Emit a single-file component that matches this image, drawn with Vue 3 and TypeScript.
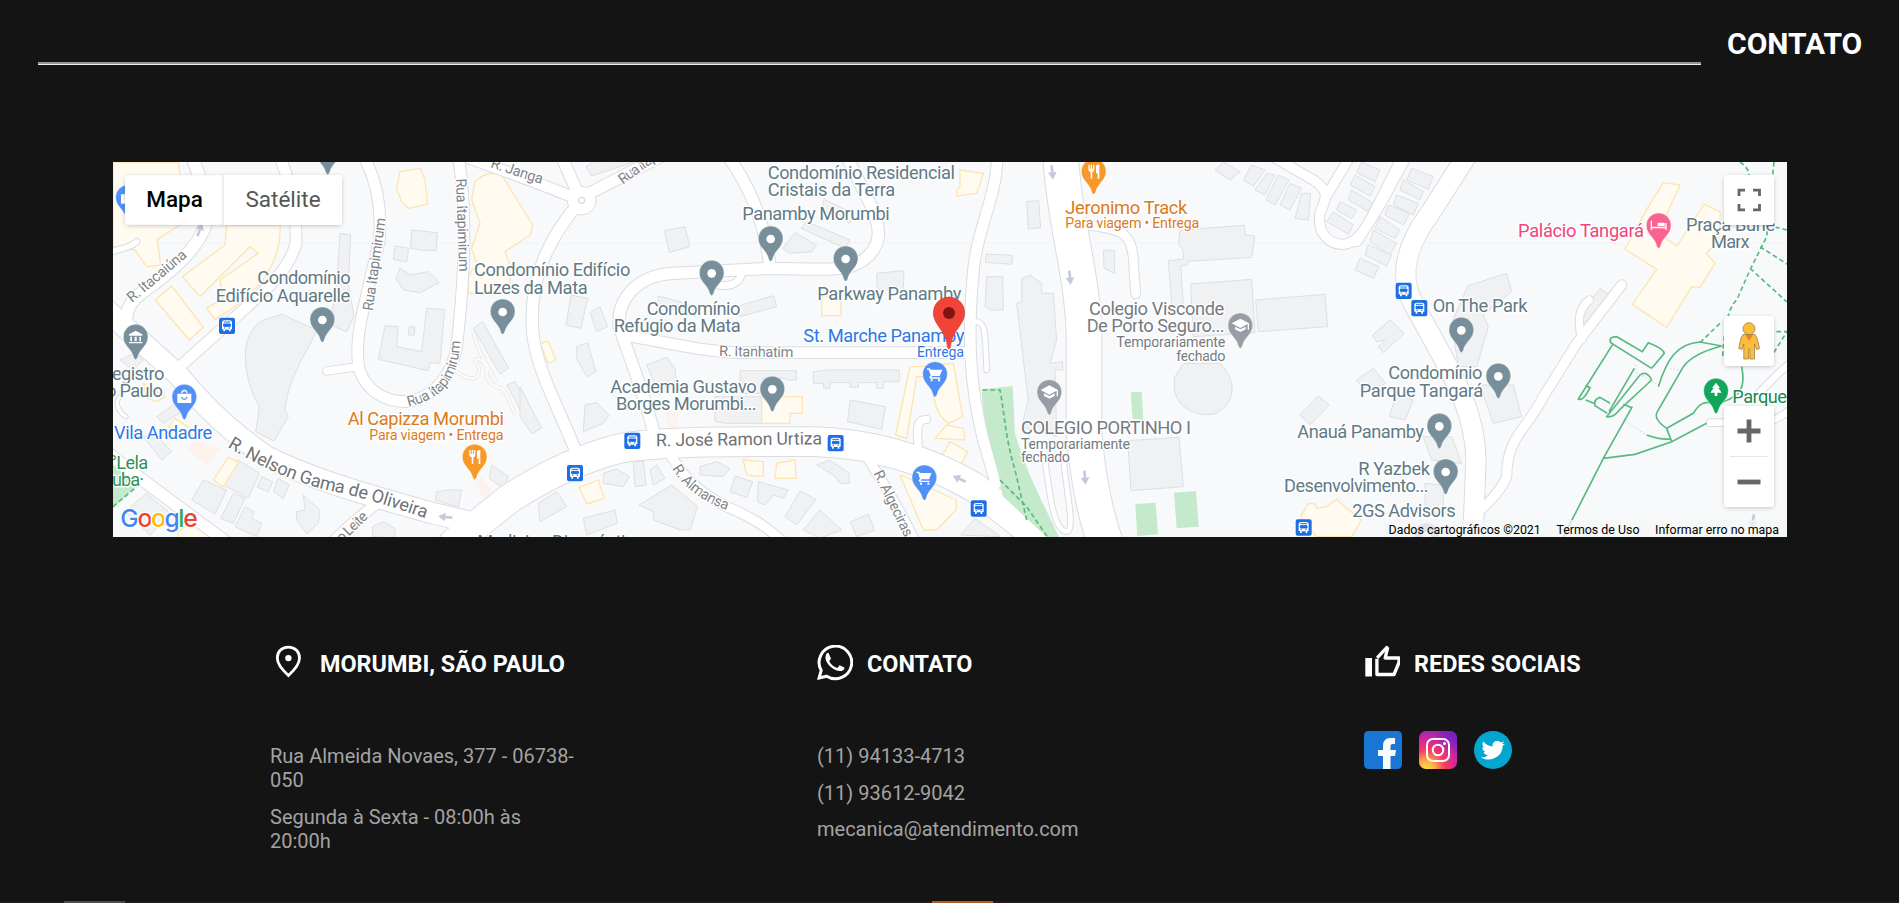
<script setup lang="ts">
interface Label { x: number; y: number; w: number; t: string; c: string; s?: number; r?: number }
interface Pin { x: number; y: number; c: string; k: string }
interface Road { d: string; w: number }

// Map geometry is drawn at three units per screen pixel.
const roads: Road[] = [
  { d: 'M282 36C300 80 325 150 318 220C295 300 200 375 130 425C95 450 70 480 80 540', w: 36 },
  { d: 'M20 480L90 545L235 675C330 790 400 850 500 920C640 990 820 1040 1000 1090L1150 1125', w: 62 },
  { d: 'M20 310C60 295 90 295 110 275', w: 16 },
  { d: 'M545 36C570 100 590 150 588 280C560 385 480 430 240 650', w: 32 },
  { d: 'M800 36C835 110 845 190 838 270L785 500Q765 600 778 660C800 720 850 755 920 755C1010 745 1060 660 1070 590C1090 420 1105 200 1075 20', w: 32 },
  { d: 'M775 650L680 663', w: 22 },
  { d: 'M1080 15C1180 50 1320 100 1440 150', w: 32 },
  { d: 'M1385 20L1440 145L1680 20M1440 155C1340 270 1290 390 1297 530C1300 640 1370 760 1430 910', w: 34 },
  { d: 'M1885 20C1950 110 1995 220 2010 350', w: 34 },
  { d: 'M2240 20L2315 170C2345 240 2345 290 2290 330C2240 370 2140 355 2010 355L1720 370C1610 375 1550 450 1558 530C1580 600 1630 720 1665 860', w: 34 },
  { d: 'M1925 370Q1915 415 1850 405', w: 20 },
  { d: 'M1570 555C1690 575 1800 605 1930 608H2610', w: 32 },
  { d: 'M2692 20C2690 150 2625 240 2618 390C2605 540 2605 690 2650 870L2688 1000', w: 32 },
  { d: 'M2882 20C2890 200 2950 380 2952 560V850Q2970 1050 3015 1175', w: 104 },
  { d: 'M2965 225C3070 240 3095 250 3100 330L3107 432', w: 26 },
  { d: 'M2630 515C2660 520 2655 560 2660 660', w: 14 },
  { d: 'M2835 930C2850 1040 2860 1130 2895 1145C2930 1150 2900 1040 2890 920', w: 14 },
  { d: 'M3510 15L3640 90C3695 125 3675 150 3660 190C3650 250 3690 285 3730 283C3775 280 3800 230 3840 165L3925 10M3675 145L3750 20', w: 28 },
  { d: 'M3770 275C3830 190 3870 80 3915 10', w: 28 },
  { d: 'M4105 10L3990 190C3930 270 3890 370 3940 460C4040 650 4125 760 4128 930L4118 1180', w: 58 },
  { d: 'M4565 405L4430 580L4330 740C4280 840 4220 860 4220 980Q4200 1030 4130 1090', w: 28 },
  { d: 'M4468 450C4430 480 4435 520 4445 570', w: 22 },
  { d: 'M4830 818H4980C5030 815 5060 790 5080 770M4960 750Q5020 680 5070 640', w: 20 },
  { d: 'M20 905C120 990 240 1070 390 1185', w: 34 },
  { d: 'M840 1055Q760 1110 690 1185', w: 30 },
  { d: 'M60 740C40 760 60 790 78 800', w: 10 },
  { d: 'M1710 910Q1760 1010 1880 1070Q2000 1120 2050 1180', w: 28 },
  { d: 'M2310 935Q2390 1060 2450 1185', w: 28 },
  { d: 'M2455 900C2450 825 2450 810 2480 808', w: 22 },
  { d: 'M1060 1180L1230 1045Q1400 935 1560 895C1700 870 2000 875 2140 875C2320 880 2480 930 2620 1010L2800 1150', w: 86 },
]

const buildings: string[] = [
  'M545 493L650 540L632 580C590 650 560 720 555 780L565 800L522 873L467 845L478 770C430 690 410 550 490 510Z',
  'M720 250L752 255L745 400L762 500L740 545L690 525L710 400Z',
  'M935 240L1012 248L1008 302L962 300L932 295Z', 'M885 287L926 295L920 336L880 328Z',
  'M900 355L930 375L985 365L1018 398L960 428L910 420L888 385Z',
  'M855 527L895 530L890 590L965 605L980 475L1034 478L1020 640L990 638L985 662L835 628Z', 'M928 530L945 532L942 556L925 554Z',
  'M1120 535L1148 515L1226 655L1200 672Z', 'M1220 705L1245 695L1320 830L1300 850Z',
  'M60 630L105 610L130 630L100 660Z', 'M170 800L220 765L245 785L190 820Z', 'M130 860L165 850L215 905L185 930Z',
  'M275 1050L310 990L380 1020L345 1092Z', 'M400 1030L435 1045L400 1120L362 1105Z', 'M435 1070L462 1085L455 1105L485 1120L470 1160L405 1130Z',
  'M370 1005L415 930L478 970L445 1045Z', 'M485 980L518 995L505 1025L472 1012Z', 'M535 985L568 1005L550 1045L520 1025Z',
  'M610 1035L660 1080L655 1120L620 1152L590 1110V1085L615 1080Z', 'M75 1085L140 1030L210 1090L150 1155Z',
  'M1010 1025L1045 1020L1085 1020L1075 1070L1005 1050Z', 'M1175 945L1225 980L1210 1015L1168 985Z', 'M818 1130L850 1115L885 1135V1165L818 1160Z',
  'M1458 50L1520 10L1600 36L1475 78Z', 'M1693 242L1755 230L1770 290L1708 307Z',
  'M2085 248L2150 285L2135 305L2070 310L2048 295Z', 'M2120 215L2250 270L2235 295L2103 235Z', 'M2172 148L2260 190L2250 220L2165 180Z',
  'M2330 370L2412 362L2410 418L2332 420Z', 'M1675 438L1793 470L1785 500L1673 463Z', 'M1915 468L2020 437L2030 470L1920 500Z',
  'M1413 435L1463 445L1443 535L1398 525Z', 'M1470 488L1500 470L1523 530L1490 545Z', 'M1430 590L1463 578L1488 665L1460 680L1430 625Z',
  'M1640 645L1700 622L1725 655L1730 700L1680 735Z', 'M1455 765L1490 758L1528 795L1510 820L1450 845Z',
  'M1260 710L1325 835L1295 850L1260 800Z', 'M1920 662H2090V690H2065L2050 685H1990V730H1920Z', 'M2140 665L2180 660H2398V695H2350V715H2330V698H2275V712H2250V698H2190V715H2170V700H2140Z',
  'M2250 750L2357 770L2345 838L2243 815Z', 'M1845 740H1985V820H1880L1845 815Z',
  'M1800 950L1850 935L1890 955L1870 980L1800 975Z', 'M1905 978L1958 995L1940 1042L1890 1025Z', 'M1975 995L2065 1020L2050 1045L2020 1035L1995 1065L1972 1055Z',
  'M2150 945L2190 930L2248 970V1000L2220 1000L2200 975Z', 'M2100 1023L2148 1048L2090 1125L2055 1100Z', 'M2160 1080L2225 1140L2160 1165L2110 1140Z', 'M2252 1115L2305 1093L2324 1140L2270 1160Z',
  'M1600 935L1630 933L1638 1005L1605 1010Z', 'M1510 970L1550 957L1588 980L1570 1010L1510 1000Z', 'M1650 960L1670 945L1695 985L1660 1005Z',
  'M1715 1005L1793 1070L1770 1140L1740 1140L1660 1110V1085L1617 1065Z', 'M1315 1060L1370 1025L1400 1070L1320 1115Z', 'M1450 1105L1545 1080L1552 1120L1460 1155Z',
  'M2780 155L2816 152L2822 233L2785 237Z', 'M2658 312L2738 316L2736 343L2656 337Z', 'M2660 380H2708L2710 480H2672L2655 470Z', 'M3010 300L3044 303V370L3012 355Z',
  'M2765 385L2790 375L2825 400V430H2860L2870 570L2850 640L2888 635V660H2865L2870 860L2765 830L2785 750L2770 630L2750 460L2765 455Z',
  'M3240 240L3433 226L3436 255L3464 258L3460 288L3455 322L3265 334L3262 345L3242 348L3250 465H3215L3205 332L3250 328V302L3235 280Z',
  'M3272 402L3455 388L3465 548L3280 560Z', 'M3467 450L3675 433L3683 530L3475 545Z',
  'M3250 640H3360C3420 700 3400 770 3340 793C3270 800 3210 760 3225 680Z', 'M3083 872L3237 862L3250 1010L3093 1022Z',
  'M3600 795L3655 738L3687 765L3630 825Z', 'M2582 1155L2625 1105L2700 1160Z',
  'M3370 36L3420 65L3390 90L3345 60Z', 'M3455 45L3495 60L3460 108L3430 90Z', 'M3500 70L3525 75L3495 135L3465 120Z', 'M3535 75L3567 90L3525 165L3498 150Z', 'M3570 100L3605 115L3570 180L3540 165Z', 'M3605 130H3632L3625 210L3585 205Z',
  'M3720 155L3770 180L3755 205L3710 180Z', 'M3700 185L3760 225L3745 252L3680 215Z', 'M3755 120L3820 160L3805 185L3745 150Z', 'M3765 75L3825 110L3810 138L3750 105Z', 'M3785 36L3840 60L3825 95L3770 68Z',
  'M3935 55L4000 80L3985 118L3920 90Z', 'M3910 90L3970 125L3960 150L3900 120Z', 'M3890 135L3955 160L3940 195L3880 165Z', 'M3865 165L3930 190L3910 225L3855 195Z', 'M3840 200L3900 240L3885 265L3825 235Z', 'M3820 240L3890 280L3870 315L3810 275Z', 'M3805 285L3875 315L3860 348L3795 315Z', 'M3780 325L3837 350L3820 385L3765 360Z',
  'M4103 408L4220 370L4235 425L4150 495L4165 530L4130 650L4075 650L4055 520Z', 'M3818 555L3870 510L3913 550L3850 608L3835 590L3855 570L3830 575Z',
  'M4140 705L4240 705L4265 800L4180 820Z', 'M3770 690L3820 655L3857 700L3800 730Z', 'M3890 730L3940 750L3915 810L3868 800Z', 'M3970 860L4055 860L4085 940L3995 930Z', 'M3975 1000L4030 1005V1090H3975Z', 'M4440 500L4500 415L4528 435L4465 528Z',
]
const shops: string[] = [
  'M39 36H235L240 75V225L172 268L182 345L140 350L105 300L39 290Z', 'M380 225H540C545 320 500 420 345 508L320 475L370 445L360 390L475 310L450 290L300 440L247 380L375 285Z', 'M215 408L310 532L268 570L166 450Z',
  'M900 65L962 55L975 90L983 162L925 175L905 155L890 115Z', 'M1125 95Q1160 60 1205 75L1298 225L1290 255L1215 305L1230 345L1230 430H1105V380L1130 340L1115 295L1140 220L1115 150Z',
  'M130 700L195 740L170 755L140 745Z', 'M205 830L225 805L270 835L280 865Z', 'M385 922L415 937L370 1010L340 990Z', 'M235 1145L285 1110L330 1162L235 1165Z',
  'M2165 440H2223V497H2165Z', 'M1320 580L1345 573L1367 630L1345 640Z', 'M1985 740H2107V790H2070V820H1985Z',
  'M2580 60L2650 70L2630 130L2570 138V120L2580 110Z', 'M2430 650H2460L2560 640L2588 800L2545 820C2500 790 2490 710 2510 680H2450L2420 865L2387 855Z', 'M2505 865L2540 825L2590 835L2595 870Z', 'M2550 875L2603 905L2580 950L2520 930Z',
  'M2400 975L2460 1000L2568 1050V1080L2510 1140H2470Z', 'M1930 930L1990 935V980L1940 975Z', 'M2030 940L2085 930L2088 985L2025 985Z', 'M1437 1012L1495 990L1513 1045L1460 1062Z',
  'M3625 1060L3645 1062L3650 1075L3680 1070L3710 1048L3740 1075L3784 1110L3755 1160H3650L3602 1100Z', 'M4690 98L4740 105L4690 215L4675 245L4730 290L4812 163L4860 185V270L4818 310L4845 340L4800 412L4775 410L4700 532L4597 463L4670 358L4575 297L4645 170Z',
]

const G = '#617a86'
const S = '#808387'
const B = '#2f77e8'
const O = '#dc7a1c'
const K = '#757a80'
const labels: Label[] = [
  { x: 472, y: 403, w: 280, t: 'Condomínio', c: G }, { x: 347, y: 456, w: 404, t: 'Edifício Aquarelle', c: G },
  { x: 36, y: 689, w: 157, t: 'egistro', c: G }, { x: 18, y: 741, w: 171, t: 'o Paulo', c: G },
  { x: 42, y: 867, w: 295, t: 'Vila Andadre', c: B }, { x: 30, y: 957, w: 115, t: '°Lela', c: '#2e9258' }, { x: 36, y: 1009, w: 96, t: 'uba·', c: '#2e9258' },
  { x: 743, y: 826, w: 469, t: 'Al Capizza Morumbi', c: O }, { x: 808, y: 870, w: 403, t: 'Para viagem • Entrega', c: O, s: 43 },
  { x: 1122, y: 378, w: 469, t: 'Condomínio Edifício', c: G }, { x: 1122, y: 431, w: 341, t: 'Luzes da Mata', c: G },
  { x: 2003, y: 86, w: 562, t: 'Condomínio Residencial', c: G }, { x: 2003, y: 138, w: 383, t: 'Cristais da Terra', c: G },
  { x: 1927, y: 211, w: 442, t: 'Panamby Morumbi', c: G }, { x: 2152, y: 451, w: 432, t: 'Parkway Panamby', c: G },
  { x: 1640, y: 494, w: 281, t: 'Condomínio', c: G }, { x: 1541, y: 547, w: 381, t: 'Refúgio da Mata', c: G },
  { x: 2110, y: 576, w: 483, t: 'St. Marche Panamby', c: B }, { x: 2451, y: 621, w: 141, t: 'Entrega', c: B, s: 43 },
  { x: 1531, y: 728, w: 439, t: 'Academia Gustavo', c: G }, { x: 1548, y: 780, w: 422, t: 'Borges Morumbi...', c: G },
  { x: 1668, y: 889, w: 498, t: 'R. José Ramon Urtiza', c: '#6d7277', s: 53, r: -0.7 },
  { x: 1857, y: 618, w: 223, t: 'R. Itanhatim', c: S, s: 44, r: 1 },
  { x: 2896, y: 191, w: 366, t: 'Jeronimo Track', c: O }, { x: 2896, y: 234, w: 402, t: 'Para viagem • Entrega', c: O, s: 43 },
  { x: 2967, y: 494, w: 406, t: 'Colegio Visconde', c: K }, { x: 2960, y: 547, w: 414, t: 'De Porto Seguro...', c: K },
  { x: 3049, y: 591, w: 327, t: 'Temporariamente', c: K, s: 43 }, { x: 3229, y: 632, w: 147, t: 'fechado', c: K, s: 43 },
  { x: 2763, y: 852, w: 510, t: 'COLEGIO PORTINHO I', c: K }, { x: 2763, y: 896, w: 327, t: 'Temporariamente', c: K, s: 43 }, { x: 2763, y: 937, w: 147, t: 'fechado', c: K, s: 43 },
  { x: 3998, y: 485, w: 285, t: 'On The Park', c: G }, { x: 3865, y: 688, w: 282, t: 'Condomínio', c: G }, { x: 3779, y: 740, w: 371, t: 'Parque Tangará', c: G },
  { x: 3592, y: 864, w: 380, t: 'Anauá Panamby', c: G }, { x: 3775, y: 974, w: 215, t: 'R Yazbek', c: G }, { x: 3552, y: 1027, w: 434, t: 'Desenvolvimento...', c: G }, { x: 3757, y: 1102, w: 310, t: '2GS Advisors', c: G },
  { x: 4254, y: 262, w: 378, t: 'Palácio Tangará', c: '#f0447c' }, { x: 4758, y: 243, w: 268, t: 'Praça Burle', c: G }, { x: 4833, y: 295, w: 116, t: 'Marx', c: G },
  { x: 4897, y: 758, w: 164, t: 'Parque', c: '#198a4e' }, { x: 1132, y: 1194, w: 500, t: 'Medicina Diagnóstica', c: G },
  { x: 96, y: 459, w: 218, t: 'R. Itacaiúna', c: S, s: 44, r: -40 },
  { x: 818, y: 484, w: 281, t: 'Rua Itapimirum', c: S, s: 44, r: -82 },
  { x: 1068, y: 86, w: 280, t: 'Rua Itapimirum', c: S, s: 44, r: 88 },
  { x: 1170, y: 52, w: 162, t: 'R. Janga', c: S, s: 44, r: 18 },
  { x: 1568, y: 104, w: 190, t: 'Rua Itapeva', c: S, s: 44, r: -36 },
  { x: 725, y: 1180, w: 112, t: 'o Leite', c: S, s: 44, r: -44 },
  { x: 2320, y: 970, w: 215, t: 'R. Algeciras', c: S, s: 44, r: 64 },
]

const pins: Pin[] = [
  { x: 683, y: 5, c: '#768f9a', k: 'dot' }, { x: 667, y: 508, c: '#768f9a', k: 'dot' }, { x: 1208, y: 484, c: '#768f9a', k: 'dot' }, { x: 107, y: 560, c: '#768f9a', k: 'bank' },
  { x: 84, y: 142, c: '#5390f5', k: 'bag' }, { x: 253, y: 740, c: '#5390f5', k: 'bag' }, { x: 1124, y: 920, c: '#f79827', k: 'food' },
  { x: 2012, y: 265, c: '#768f9a', k: 'dot' }, { x: 2237, y: 325, c: '#768f9a', k: 'dot' }, { x: 1835, y: 368, c: '#768f9a', k: 'dot' }, { x: 2017, y: 716, c: '#768f9a', k: 'dot' },
  { x: 2505, y: 672, c: '#5390f5', k: 'cart' }, { x: 2473, y: 982, c: '#5390f5', k: 'cart' }, { x: 2981, y: 64, c: '#f79827', k: 'food' },
  { x: 3421, y: 526, c: '#989da5', k: 'school' }, { x: 2848, y: 726, c: '#989da5', k: 'school' },
  { x: 4084, y: 539, c: '#768f9a', k: 'dot' }, { x: 4195, y: 677, c: '#768f9a', k: 'dot' }, { x: 4018, y: 827, c: '#768f9a', k: 'dot' }, { x: 4037, y: 964, c: '#768f9a', k: 'dot' }, { x: 3980, y: 1156, c: '#a3afb7', k: 'dot' },
  { x: 4676, y: 226, c: '#fa6291', k: 'bed' }, { x: 4848, y: 722, c: '#11a65c', k: 'tree' },
]
const buses: [number, number][] = [[381, 527], [1597, 872], [2207, 879], [1425, 969], [2636, 1075], [3611, 1132], [3911, 422], [3958, 474]]
const arrows: [number, number, number][] = [[300, 238, 20], [1035, 1101, -84], [2857, 68, 175], [2910, 384, 175], [2955, 984, 175], [2577, 986, -65], [4958, 1115, 190]]

const glyphs: Record<string, string> = {
  bank: 'M0 -18L20 -7V-3H-20V-7ZM-16 0H-11V14H-16ZM-3 0H3V14H-3ZM11 0H16V14H11ZM-20 16H20V20H-20Z',
  bag: 'M-21 -9H21V19H-21ZM-10 -10C-10 -24 10 -24 10 -10H6C6 -18 -6 -18 -6 -10Z',
  food: 'M-16 -20H-12V-8H-9V-20H-5V-8H-2V-20H2V-5Q2 0 -4 2V22H-9V2Q-16 0 -16 -5ZM7 -16Q10 -21 17 -20V22H12V6H7Z',
  cart: 'M-24 -17H-16L-12 -13H22L14 6H-9L-11 10H16V14H-15L-17 9L-13 4L-19 -13H-24ZM-13 16H-7V22H-13ZM9 16H15V22H9Z',
  school: 'M0 -20L26 -6L0 8L-26 -6ZM-16 4L0 12L16 4V12L0 20L-16 12ZM22 -5H26V13H22Z',
  bed: 'M-24 -14H-20V4H20V-7H24V14H20V9H-20V14H-24ZM-3 -8H18V2H-3Z',
  tree: 'M0 -24L12 -8H7L17 6H4V16H-4V6H-17L-7 -8H-12Z',
}
const address: string[] = ['Rua Almeida Novaes, 377 - 06738-050', 'Segunda à Sexta - 08:00h às 20:00h']
const contacts: string[] = ['(11) 94133-4713', '(11) 93612-9042', 'mecanica@atendimento.com']
</script>

<template>
  <main class="page">
    <header class="heading">
      <hr class="rule" />
      <h1>CONTATO</h1>
    </header>

    <section class="map">
      <svg class="canvas" viewBox="39 36 5022 1125" preserveAspectRatio="none">
        <rect x="39" y="36" width="5022" height="1125" fill="#f8f9fb" />
        <path d="M39 280H5061" stroke="#eff0f2" stroke-width="2" />
        <g fill="#f0f1f3" stroke="#dddfe2" stroke-width="3"><path v-for="(d, i) in buildings" :key="i" :d="d" /></g>
        <g fill="#fffbf0" stroke="#fde5b0" stroke-width="4" stroke-linejoin="round"><path v-for="(d, i) in shops" :key="i" :d="d" /></g>
        <g fill="#fdf3ec">
          <path d="M285 870L360 895L320 945L262 900ZM1125 990L1145 980L1185 1035L1155 1055ZM1693 785H1735L1730 845H1708Z" />
        </g>
        <g fill="#c4e9cb">
          <path d="M39 900L130 990L39 1075ZM3092 727L3125 725L3130 810L3098 808ZM3106 1062L3167 1058L3174 1153L3112 1158ZM3222 1028L3288 1023L3296 1130L3230 1135Z" />
        </g>
        <g fill="none" stroke="#d9dce1" stroke-linecap="round" stroke-linejoin="round">
          <path v-for="(r, i) in roads" :key="i" :d="r.d" :stroke-width="r.w + 6" />
          <circle cx="1445" cy="152" r="43" stroke-width="3" />
        </g>
        <g fill="none" stroke="#fff" stroke-linecap="round" stroke-linejoin="round">
          <path v-for="(r, i) in roads" :key="i" :d="r.d" :stroke-width="r.w" />
        </g>
        <circle cx="1445" cy="152" r="41" fill="#fff" />
        <circle cx="1445" cy="151" r="9" fill="#fff" stroke="#d9dce1" stroke-width="4" />
        <path d="M1065 660C1110 700 1145 690 1135 650C1110 620 1145 620 1160 650C1155 710 1190 710 1205 715C1225 730 1225 760 1245 790M1120 545C1130 600 1160 640 1190 700" fill="none" stroke="#e3e4e6" stroke-width="12" />
        <path d="M1065 660C1110 700 1145 690 1135 650C1110 620 1145 620 1160 650C1155 710 1190 710 1205 715C1225 730 1225 760 1245 790M1120 545C1130 600 1160 640 1190 700" fill="none" stroke="#fbfbfa" stroke-width="8" />
        <path d="M2645 718L2738 708L2745 850C2780 970 2830 1060 2877 1161H2840L2708 1038C2700 960 2650 850 2645 718Z" fill="#c4e9cb" />
        <g fill="none" stroke="#56bb80" stroke-width="5">
          <g stroke-dasharray="14 9">
            <path d="M2648 720H2700C2715 800 2715 860 2745 960L2780 1110M2700 990L2780 1070L2845 1165M39 1070L110 1010" />
            <path d="M4920 36Q4955 60 4945 90M5022 36L5000 260L4950 360L4910 450Q4875 480 4868 620M4980 290L5061 342M4950 355L5061 456M4800 578L4860 520M5061 240L5020 230M4960 545H5061L5020 610" />
          </g>
          <path d="M4390 1161L4510 925L4597 770M4510 925L4605 913L4715 875L4820 820M4715 875L4700 835Q4655 805 4675 780L4750 650Q4780 610 4865 588L4800 576C4730 580 4700 630 4675 710M4700 835L4780 790C4810 740 4830 765 4870 755C4910 740 4940 725 4925 650M4640 855Q4680 870 4710 867" />
          <path d="M4655 655L4693 610Q4690 595 4645 578L4627 605L4550 560Q4525 560 4532 578L4655 655M4540 580L4435 747Q4450 755 4470 713L4457 706M4603 655L4527 785M4655 690Q4640 660 4620 675L4520 800Q4540 805 4560 778L4655 690M4457 750L4482 760M4530 760L4500 742Q4480 748 4485 767L4522 790M4570 763L4595 773" />
        </g>
        <path d="M4607 645V665L4675 705M4710 655L4735 660M4550 750L4560 770M4575 815L4640 855" fill="none" stroke="#d6d8dc" stroke-width="4" stroke-dasharray="4 7" />

        <g class="labels">
          <text v-for="l in labels" :key="l.t + l.x + l.y" :x="l.x" :y="l.y" :fill="l.c" :font-size="l.s ?? 55" :textLength="l.w" :transform="l.r ? `rotate(${l.r} ${l.x} ${l.y})` : undefined">{{ l.t }}</text>
          <path id="nelson" d="M382 890Q560 1000 730 1030Q850 1060 980 1106" fill="none" stroke="none" />
          <text font-size="54" fill="#6d7277" textLength="635"><textPath href="#nelson">R. Nelson Gama de Oliveira</textPath></text>
          <path id="itapi" d="M925 770C1030 745 1080 690 1082 550" fill="none" stroke="none" />
          <text font-size="44" :fill="S" textLength="276"><textPath href="#itapi">Rua Itapimirum</textPath></text>
          <path id="almansa" d="M1716 955Q1765 1040 1885 1082" fill="none" stroke="none" />
          <text font-size="44" :fill="S" textLength="211"><textPath href="#almansa">R. Almansa</textPath></text>
        </g>

        <g v-for="(a, i) in arrows" :key="'a' + i" :transform="`translate(${a[0]} ${a[1]}) rotate(${a[2]})`">
          <path d="M0 -21L13 1H4V22H-4V1H-13Z" fill="#c5c9dc" />
        </g>
        <g v-for="(b, i) in buses" :key="'b' + i" :transform="`translate(${b[0]} ${b[1]})`">
          <rect x="-26" y="-26" width="52" height="52" rx="8" fill="#fff" />
          <rect x="-24" y="-24" width="48" height="49" rx="6" fill="#1d6fe3" />
          <path d="M-15 -11Q-14 -16 -8 -16H8Q14 -16 15 -11V11H11V17H6V12H-6V17H-11V11H-15Z" fill="#fff" />
          <path d="M-10 -11H10M-10 -5H10V2H-10ZM-9 7H-5M5 7H9" fill="#1d6fe3" stroke="#1d6fe3" stroke-width="3" />
        </g>
        <g v-for="(p, i) in pins" :key="'p' + i" :transform="`translate(${p.x} ${p.y})`">
          <path d="M-37 0A37 37 0 1 1 37 0C37 28 12 35 6 62Q0 76 -6 62C-12 35 -37 28 -37 0Z" :fill="p.c" stroke="#fff" stroke-opacity=".55" stroke-width="2" />
          <circle v-if="p.k === 'dot'" r="13" cy="2" fill="#fff" />
          <path v-else :d="glyphs[p.k]" fill="#fff" />
          <path v-if="p.k === 'bag'" d="M-9 1Q0 15 9 1" fill="none" stroke="#5390f5" stroke-width="4" />
        </g>
        <path d="M2500 488A47 47 0 1 1 2594 488C2594 525 2556 540 2551 592Q2547 603 2543 592C2538 540 2500 525 2500 488Z" fill="#ef4437" stroke="#dc3f33" stroke-width="2" />
        <circle cx="2547" cy="489" r="18" fill="#811411" />
        <text class="google" x="61" y="1132" font-size="74" textLength="232"><tspan fill="#4285f4">G</tspan><tspan fill="#ea4335">o</tspan><tspan fill="#fbbc05">o</tspan><tspan fill="#4285f4">g</tspan><tspan fill="#34a853">l</tspan><tspan fill="#ea4335">e</tspan></text>
      </svg>

      <div class="types">
        <button class="type active">Mapa</button>
        <button class="type">Satélite</button>
      </div>
      <div class="controls">
        <button class="control">
          <svg width="24" height="24" viewBox="0 0 24 24"><path d="M2 8V2.2H8M16 2.2H22.5V8M22.5 16V21.8H16M8 21.8H2V16" fill="none" stroke="#666" stroke-width="2.8" /></svg>
        </button>
        <button class="control person">
          <svg width="22" height="38" viewBox="0 0 22 38">
            <g fill="#fdbd3c" stroke="#8b7548" stroke-width=".7"><path d="M5 12.5H17L19 16L21.5 26.5L18.5 27.5L16.5 22V37H11.8V27H10.5V37H5.8V22L4 27.5L.7 26.5L3 16Z" /><circle cx="11" cy="6.7" r="6" /></g>
            <path d="M7.5 13H14.8L11.2 19.5Z" fill="#e58233" />
          </svg>
        </button>
        <div class="zoom">
          <button class="step plus"><svg width="24" height="24" viewBox="0 0 24 24"><path d="M.5 12H23.5M12 .5V23.5" stroke="#666" stroke-width="4.8" /></svg></button>
          <button class="step"><svg width="24" height="24" viewBox="0 0 24 24"><path d="M.5 12H23.5" stroke="#666" stroke-width="4.8" /></svg></button>
        </div>
      </div>
      <div class="credits"><span>Dados cartográficos ©2021</span><span>Termos de Uso</span><span>Informar erro no mapa</span></div>
    </section>

    <section class="info">
      <article>
        <h2><svg width="36" height="36" viewBox="0 0 36 36"><path d="M18.4 2.1C11.5 2.1 7.3 7 7.3 13C7.3 20 14 26.5 18.4 30.5C22.8 26.5 29.5 20 29.5 13C29.5 7 25.3 2.1 18.4 2.1Z" fill="none" stroke="#fff" stroke-width="2.8" /><circle cx="18.4" cy="13.1" r="3.2" fill="#fff" /></svg><span>MORUMBI, SÃO PAULO</span></h2>
        <p v-for="t in address" :key="t">{{ t }}</p>
      </article>
      <article>
        <h2><svg width="36" height="36" viewBox="0 0 36 36"><path d="M2.1 33L4.2 25.4A16.3 16.3 0 1 1 9.7 31.2Z" fill="none" stroke="#fff" stroke-width="3" /><path d="M12 8.8L14.5 14.2C14.8 15 13 16.5 12.8 17C14.5 20.5 17.5 23 21 24L23.2 21.3L28 23.4C28.3 26 25 27.5 22.5 27C15 25.5 8.5 18 9.1 13.5C9.4 10.5 10.5 8.5 12 8.8Z" transform="translate(-.6 -1)" fill="#fff" /></svg><span>CONTATO</span></h2>
        <p v-for="t in contacts" :key="t">{{ t }}</p>
      </article>
      <article>
        <h2><svg width="36" height="36" viewBox="0 0 36 36"><path d="M1.3 13H8V31.5H1.3Z" fill="#fff" /><path d="M13.2 12.8L22.7 2.5L23.5 3.4L21.2 13H35V17.5L30 29.5H12.9V13.7" fill="none" stroke="#fff" stroke-width="3.3" stroke-linejoin="round" /></svg><span>REDES SOCIAIS</span></h2>
        <div class="social">
          <svg width="38" height="38" viewBox="0 0 38 38"><rect width="38" height="38" rx="4.5" fill="#1976d2" /><path d="M19 38V25H14V19H19V15Q19 7.3 26 7H31V13H28Q26.5 13 26.5 15.5V19H32L31 25H26.5V38Z" fill="#fafafa" /></svg>
          <svg width="38" height="38" viewBox="0 0 38 38">
            <defs>
              <radialGradient id="ig" cx=".2" cy="1" r="1.05"><stop offset="0" stop-color="#fee439" /><stop offset=".2" stop-color="#feb047" /><stop offset=".48" stop-color="#f83861" /><stop offset=".72" stop-color="#d1299c" /><stop offset="1" stop-color="#9b25ae" /></radialGradient>
              <radialGradient id="violet" cx="1" cy="0" r=".6"><stop offset="0" stop-color="#6c1cd1" /><stop offset="1" stop-color="#6c1cd1" stop-opacity="0" /></radialGradient>
            </defs>
            <rect width="38" height="38" rx="7" fill="url(#ig)" /><rect width="38" height="38" rx="7" fill="url(#violet)" />
            <g fill="none" stroke="#fff" stroke-width="2"><rect x="8" y="8" width="22" height="22" rx="6" /><circle cx="19" cy="19" r="5.3" /></g><circle cx="25.5" cy="12.5" r="1.5" fill="#fff" />
          </svg>
          <svg width="38" height="38" viewBox="0 0 38 38"><circle cx="19" cy="19" r="19" fill="#03a5d1" /><path d="M31 13C30 13.8 29.5 14 28.7 14.6C29 24 20.5 29.2 13 28.4C10.5 28.2 8.5 27.4 7 26.2C9.5 26.5 12 25.8 13.7 24.4C11.5 24 10.2 22.9 9.6 21.1H11.5C9.5 20.2 8.3 18.5 8.3 16.2L10.3 16.8C8.4 15.1 8 12.6 9.2 10.5C11.7 13.6 15 15.1 18.6 15.4C18 12 20.5 10 23.4 10C24.9 10 26 10.6 27 11.5L30 10.4C29.6 11.6 28.9 12.4 28 13.1Z" fill="#fff" /></svg>
        </div>
      </article>
    </section>
    <footer class="taskline"><span class="mark grey"></span><span class="mark orange"></span></footer>
  </main>
</template>

<style>
body { margin: 0; background: #141414; overflow: hidden; }
</style>

<style scoped>
* { box-sizing: border-box; }
.page { width: 1900px; height: 903px; background: #141414; color: #fff; font-family: Roboto, sans-serif; display: flex; flex-direction: column; border-right: 1px solid #f5f5f5; }
.heading { height: 162px; padding: 24px 38px 0; display: flex; align-items: flex-start; }
.rule { flex: 1; height: 3px; margin: 38px 26px 0 0; border: 0; border-bottom: 1px solid #eeeeee; background: #979393; }
h1 { margin: 0; font-size: 30px; line-height: 40px; font-weight: 700; width: 134px; white-space: nowrap; }
.map { position: relative; width: 1674px; height: 375px; margin-left: 113px; overflow: hidden; flex: none; }
.canvas { display: block; width: 1674px; height: 375px; }
.labels text { paint-order: stroke; stroke: #fff; stroke-width: 9px; stroke-linejoin: round; stroke-opacity: .85; }
.google { font-family: Inter, sans-serif; font-weight: 500; paint-order: stroke; stroke: #fff; stroke-width: 8px; }
button { border: 0; margin: 0; padding: 0; background: #fff; font-family: inherit; display: flex; align-items: center; justify-content: center; }
.types { position: absolute; left: 12px; top: 13px; display: flex; height: 50px; border-radius: 3px; box-shadow: 0 1px 5px -1px rgba(0, 0, 0, .3); }
.type { width: 118px; font-size: 22.5px; color: #565656; border-radius: 0 3px 3px 0; padding-bottom: 3px; }
.type.active { width: 99px; color: #000; font-weight: 500; border-radius: 3px 0 0 3px; box-shadow: inset -2px 0 2px rgba(0, 0, 0, .08); }
.controls { position: absolute; right: 13px; top: 13px; width: 50px; display: flex; flex-direction: column; }
.control { width: 50px; height: 50px; border-radius: 3px; box-shadow: 0 1px 5px -1px rgba(0, 0, 0, .3); }
.person { margin-top: 91px; }
.zoom { margin-top: 40px; height: 101px; background: #fff; border-radius: 3px; box-shadow: 0 1px 5px -1px rgba(0, 0, 0, .3); display: flex; flex-direction: column; align-items: center; }
.step { width: 38px; height: 50px; background: transparent; }
.plus { height: 51px; border-bottom: 1px solid #e6e6e6; }
.credits { position: absolute; right: 0; bottom: 0; height: 17px; display: flex; align-items: center; gap: 15.6px; padding: 2px 8px 0 6px; background: rgba(245, 245, 245, .75); color: #000; font-size: 12.4px; line-height: 15px; white-space: nowrap; }
.info { flex: 1; display: grid; grid-template-columns: 547px 547px 400px; padding: 108px 0 0 270px; align-content: start; }
h2 { display: flex; align-items: center; height: 36px; margin: 0 0 63px; font-size: 23.4px; font-weight: 700; gap: 14px; white-space: nowrap; }
h2 span { padding-top: 2px; }
h2 svg { flex: none; }
p { width: 308px; margin: 0 0 12.5px; font-size: 20px; line-height: 24px; color: #a3a3a3; }
.social { display: flex; gap: 17px; margin-top: -13px; }
.taskline { display: flex; height: 2px; background: #21191d; padding-left: 64px; gap: 807px; }
.mark { width: 61px; height: 2px; }
.grey { background: #4d4b4e; }
.orange { background: #a85f28; }
</style>
